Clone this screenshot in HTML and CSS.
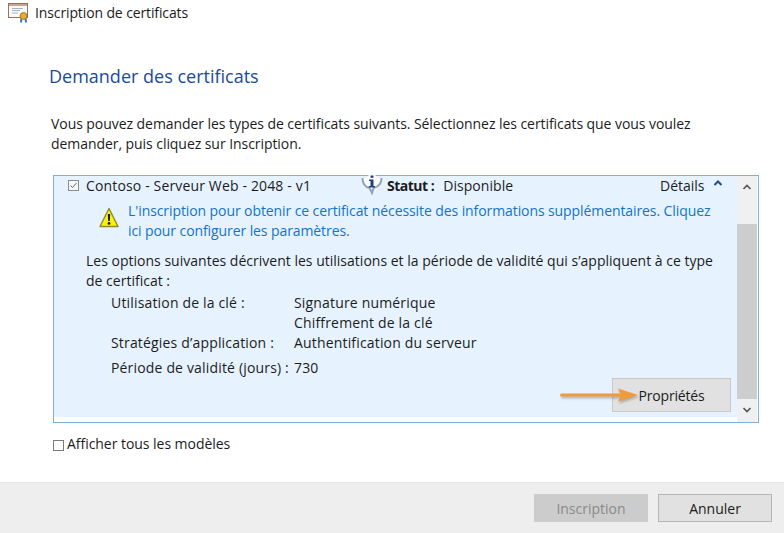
FILE: index.html
```html
<!DOCTYPE html>
<html lang="fr">
<head>
<meta charset="utf-8">
<title>Inscription de certificats</title>
<link rel="stylesheet" href="styles.css">
</head>
<body>
<div class="window">
  <header class="titlebar">
    <svg class="cert-icon" width="21" height="20" viewBox="0 0 21 20">
      <rect x="0.5" y="0.5" width="19" height="14" fill="#fbfaf6" stroke="#8f7464"/>
      <rect x="1" y="1" width="18" height="2" fill="#c9a48f"/>
      <path d="M4 5.500h11M4 7.500h8M4 10h6" stroke="#9db2cf" stroke-width="1"/>
      <path d="M13.500 15l-.5 4.500M17.500 15l.5 4.500" stroke="#3f6fc0" stroke-width="2"/>
      <circle cx="15.500" cy="13" r="3.400" fill="#e8ad2e" stroke="#a97a1a"/>
    </svg>
    <span class="title">Inscription de certificats</span>
  </header>
  <main class="content">
    <h1 class="heading">Demander des certificats</h1>
    <p class="intro">Vous pouvez demander les types de certificats suivants. Sélectionnez les certificats que vous voulez demander, puis cliquez sur Inscription.</p>
    <section class="panel">
      <div class="panel-body">
        <div class="row-head">
          <span class="check checked">
            <svg width="11" height="11" viewBox="0 0 11 11"><rect x="0.5" y="0.5" width="10" height="10" fill="#f4f8fb" stroke="#8c8c8c"/><path d="M2.500 5.500l2 2 4-4.500" fill="none" stroke="#666" stroke-width="1"/></svg>
          </span>
          <span class="cert-name">Contoso - Serveur Web - 2048 - v1</span>
          <span class="status">
            <svg class="info-icon" width="22" height="20" viewBox="0 0 22 20">
              <path d="M1.500 3c0 6 3 9 7 10l2.500 5 1.500-5c4-1 8-4 8-10" fill="#fff" stroke="#8fa3bd" stroke-width="2"/>
              <circle cx="11" cy="6" r="6.500" fill="#fff"/>
              <path d="M9.500 0.500h3v2.300h-3zM8 4.500h4.500v6.500H14v1.600H7.800V11h1.700V6.100H8z" fill="#1f3f80"/>
            </svg>
            <b>Statut :</b>
            <span class="status-value">Disponible</span>
          </span>
          <span class="details">Détails
            <svg class="chevron" width="10" height="6" viewBox="0 0 10 6"><path d="M1.500 5L5 1.500 8.500 5" fill="none" stroke="#174f86" stroke-width="2"/></svg>
          </span>
        </div>
        <div class="warning">
          <svg class="warn-icon" width="20" height="22" viewBox="0 0 20 22">
            <path d="M10 1.500L19 19.500H1z" fill="#fbf00f" stroke="#8f8a2a" stroke-linejoin="round" stroke-width="1.400"/>
            <path d="M8.800 7h2.400l-.4 7H9.200z" fill="#1a1a1a"/>
            <circle cx="10" cy="16.400" r="1.400" fill="#1a1a1a"/>
          </svg>
          <p class="warn-text">L'inscription pour obtenir ce certificat nécessite des informations supplémentaires. Cliquez ici pour configurer les paramètres.</p>
        </div>
        <p class="options">Les options suivantes décrivent les utilisations et la période de validité qui s’appliquent à ce type de certificat :</p>
        <dl class="props">
          <dt>Utilisation de la clé :</dt><dd>Signature numérique<br>Chiffrement de la clé</dd>
          <dt>Stratégies d’application :</dt><dd>Authentification du serveur</dd>
          <dt class="validity">Période de validité (jours) :</dt><dd class="validity">730</dd>
        </dl>
        <div class="actions">
          <button class="props-btn" type="button">Propriétés</button>
          <svg class="arrow" width="82" height="16" viewBox="0 0 82 16">
            <path d="M1.500 8h60" stroke="#f09a3e" stroke-width="3" stroke-linecap="round"/>
            <path d="M58 1.500L78 8 58 14.500l3-6.500z" fill="#f09a3e"/>
          </svg>
        </div>
      </div>
      <div class="scrollbar">
        <svg class="sb-arrow" width="20" height="17" viewBox="0 0 20 17"><path d="M6.500 13l3.500-3.500 3.500 3.500" fill="none" stroke="#555" stroke-width="1.600"/></svg>
        <div class="sb-track"><div class="sb-thumb"></div></div>
        <svg class="sb-arrow" width="20" height="17" viewBox="0 0 20 17"><path d="M6.500 3l3.500 3.500L13.500 3" fill="none" stroke="#555" stroke-width="1.600"/></svg>
      </div>
    </section>
    <label class="show-all"><span class="box"></span>Afficher tous les modèles</label>
  </main>
  <footer class="footer">
    <button class="btn disabled" type="button">Inscription</button>
    <button class="btn" type="button">Annuler</button>
  </footer>
</div>
</body>
</html>
```
FILE: styles.css
```css
* { box-sizing: border-box; }
html, body { margin: 0; padding: 0; background: #fff; }
body { width: 784px; height: 533px; overflow: hidden; font-family: "Open Sans", "Noto Sans", sans-serif; font-size: 14px; color: #1c1c1c; }
p, h1, dl, dd { margin: 0; }
.window { display: flex; flex-direction: column; height: 533px; }
.titlebar { display: flex; align-items: center; gap: 6px; height: 28px; padding: 0 0 3px 8px; line-height: 20px; }
.title { letter-spacing: -0.12px; }
.content { flex: 1; padding: 36px 24px 0 49px; }
.heading { font-size: 18px; font-weight: 400; line-height: 24px; color: #1a4a9c; }
.intro { margin: 26px 0 0 2px; width: 680px; line-height: 20px; letter-spacing: -0.06px; }
.panel { display: flex; margin: 21px 0 0 4px; width: 706px; height: 248px; border: 1px solid #7fb0d6; background: #fff; }
.panel-body { flex: 1; height: 241px; background: #e6f3ff; padding-left: 14px; }
.row-head { display: flex; align-items: center; height: 18px; position: relative; }
.check { display: flex; width: 18px; }
.cert-name { width: 275px; letter-spacing: 0.15px; }
.status { display: flex; align-items: center; width: 299px; }
.status b { margin-left: 4px; font-weight: 700; letter-spacing: -0.5px; }
.status-value { margin-left: 9px; letter-spacing: 0.05px; }
.info-icon { display: block; }
.details { display: flex; align-items: center; gap: 8px; }
.chevron { margin-bottom: 5px; }
.warning { display: flex; margin-top: 7px; padding-left: 29px; position: relative; }
.warn-icon { position: absolute; left: 31px; top: 6px; }
.warn-text { margin-left: 31px; width: 588px; color: #1273c8; line-height: 20px; letter-spacing: -0.09px; }
.options { margin: 10px 0 0 18px; width: 640px; line-height: 20px; letter-spacing: 0.01px; }
.props { display: grid; grid-template-columns: 183px 1fr; margin: 2px 0 0 43px; line-height: 20px; letter-spacing: 0.17px; }
.props .validity { margin-top: 5px; }
.actions { display: flex; justify-content: flex-end; position: relative; padding-right: 6px; }
.props-btn { width: 119px; height: 34px; border: 1px solid #c9c9c9; background: #e1e1e1; font: inherit; letter-spacing: -0.2px; color: #1c1c1c; padding: 0; }
.arrow { position: absolute; left: 492px; top: 9px; filter: drop-shadow(1px 2px 1px rgba(90, 70, 50, 0.35)); }
.scrollbar { display: flex; flex-direction: column; width: 20px; background: #f0f0f0; margin-right: 1px; }
.sb-arrow { display: block; flex: none; }
.sb-track { flex: 1; padding-top: 31px; }
.sb-thumb { height: 175px; background: #cdcdcd; }
.show-all { display: flex; align-items: center; margin: 11px 0 0 4px; line-height: 20px; letter-spacing: -0.04px; }
.box { display: block; width: 11px; height: 11px; border: 1px solid #7a7a7a; background: #fff; margin-right: 3px; margin-top: 2px; }
.footer { display: flex; justify-content: flex-end; gap: 10px; height: 51px; padding: 11px 12px 0 0; background: #eeeeee; border-top: 1px solid #e4e4e4; }
.btn { width: 114px; height: 28px; border: 1px solid #b5b5b5; background: #e1e1e1; font: inherit; color: #1c1c1c; padding: 0; }
.btn.disabled { background: #cccccc; border-color: #cccccc; color: #8a8a8a; }
```
